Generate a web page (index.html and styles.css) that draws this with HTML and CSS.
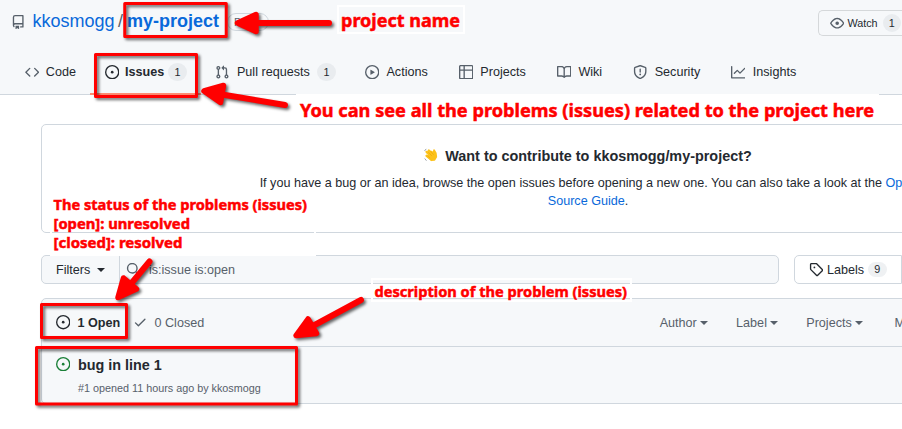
FILE: index.html
```html
<!DOCTYPE html>
<html lang="en">
<head>
<meta charset="utf-8">
<title>Issues · kkosmogg/my-project</title>
<link rel="stylesheet" href="styles.css">
</head>
<body>
<header class="header">
  <div class="title-row">
    <svg class="icon repo-icon" viewBox="0 0 16 16"><path fill-rule="evenodd" d="M2 2.500A2.500 2.500 0 014.500 0h8.750a.750.750 0 01.750.750v12.500a.750.750 0 01-.750.750h-2.500a.750.750 0 110-1.500h1.750v-2h-8a1 1 0 00-.714 1.700.750.750 0 01-1.072 1.050A2.495 2.495 0 012 11.500v-9zm10.500-1V9h-8c-.356 0-.694.074-1 .208V2.500a1 1 0 011-1h8zM5 12.250v3.250a.250.250 0 00.400.200l1.450-1.087a.250.250 0 01.300 0L8.600 15.700a.250.250 0 00.400-.200v-3.250a.250.250 0 00-.250-.250h-3.500a.250.250 0 00-.250.250z"/></svg>
    <a class="owner">kkosmogg</a><span class="slash">/</span><a class="repo">my-project</a>
    <span class="badge">Public</span>
    <div class="watch"><svg class="icon" viewBox="0 0 16 16"><path fill-rule="evenodd" d="M1.679 7.932c.412-.621 1.242-1.750 2.366-2.717C5.175 4.242 6.527 3.500 8 3.500c1.473 0 2.824.742 3.955 1.715 1.124.967 1.954 2.096 2.366 2.717a.119.119 0 010 .136c-.412.621-1.242 1.750-2.366 2.717C10.825 11.758 9.473 12.500 8 12.500c-1.473 0-2.824-.742-3.955-1.715C2.920 9.818 2.090 8.690 1.679 8.068a.119.119 0 010-.136zM8 2c-1.981 0-3.670.992-4.933 2.078C1.797 5.169.880 6.423.430 7.100a1.619 1.619 0 000 1.798c.450.678 1.367 1.932 2.637 3.024C4.329 13.008 6.019 14 8 14c1.981 0 3.670-.992 4.933-2.078 1.270-1.091 2.187-2.345 2.637-3.023a1.619 1.619 0 000-1.798c-.450-.678-1.367-1.932-2.637-3.023C11.671 2.992 9.981 2 8 2zm0 8a2 2 0 100-4 2 2 0 000 4z"/></svg><span>Watch</span><span class="counter">1</span></div>
  </div>
  <nav class="nav">
    <a class="tab"><svg class="icon" viewBox="0 0 16 16"><path d="M4.720 3.220a.750.750 0 011.060 1.060L2.060 8l3.720 3.720a.750.750 0 11-1.060 1.060L.470 8.530a.750.750 0 010-1.060l4.250-4.250zm6.560 0a.750.750 0 10-1.060 1.060L13.940 8l-3.720 3.720a.750.750 0 101.060 1.060l4.250-4.250a.750.750 0 000-1.060l-4.250-4.250z"/></svg>Code</a>
    <a class="tab active"><svg class="icon" viewBox="0 0 16 16"><path d="M8 9.500a1.500 1.500 0 100-3 1.500 1.500 0 000 3z"/><path fill-rule="evenodd" d="M8 0a8 8 0 100 16A8 8 0 008 0zM1.500 8a6.500 6.500 0 1113 0 6.500 6.500 0 01-13 0z"/></svg>Issues<span class="counter">1</span></a>
    <a class="tab wide pulls"><svg class="icon" viewBox="0 0 16 16"><path fill-rule="evenodd" d="M7.177 3.073L9.573.677A.250.250 0 0110 .854v4.792a.250.250 0 01-.427.177L7.177 3.427a.250.250 0 010-.354zM3.750 2.500a.750.750 0 100 1.500.750.750 0 000-1.500zm-2.250.750a2.250 2.250 0 113 2.122v5.256a2.251 2.251 0 11-1.500 0V5.372A2.250 2.250 0 011.500 3.250zM11 2.500h-1V4h1a1 1 0 011 1v5.628a2.251 2.251 0 101.500 0V5A2.500 2.500 0 0011 2.500zm1 10.250a.750.750 0 111.500 0 .750.750 0 01-1.500 0zM3.750 12a.750.750 0 100 1.500.750.750 0 000-1.500z"/></svg>Pull requests<span class="counter">1</span></a>
    <a class="tab wide"><svg class="icon" viewBox="0 0 16 16"><path fill-rule="evenodd" d="M1.500 8a6.500 6.500 0 1113 0 6.500 6.500 0 01-13 0zM8 0a8 8 0 100 16A8 8 0 008 0zM6.379 5.227A.250.250 0 006 5.442v5.117a.250.250 0 00.379.214l4.264-2.559a.250.250 0 000-.428L6.379 5.227z"/></svg>Actions</a>
    <a class="tab wide"><svg class="icon" viewBox="0 0 16 16"><path fill-rule="evenodd" d="M0 1.750C0 .784.784 0 1.750 0h12.500C15.216 0 16 .784 16 1.750v12.500A1.750 1.750 0 0114.250 16H1.750A1.750 1.750 0 010 14.250V1.750zM1.500 6.500v7.750c0 .138.112.250.250.250H5v-8H1.500zM6.500 6.500v8h7.750a.250.250 0 00.250-.250V6.500h-8zM14.500 5V1.750a.250.250 0 00-.250-.250H6.500V5h8zM5 5V1.500H1.750a.250.250 0 00-.250.250V5H5z"/></svg>Projects</a>
    <a class="tab wide"><svg class="icon" viewBox="0 0 16 16"><path fill-rule="evenodd" d="M0 1.750A.750.750 0 01.750 1h4.253c1.227 0 2.317.590 3 1.501A3.744 3.744 0 0111.006 1h4.245a.750.750 0 01.750.750v10.500a.750.750 0 01-.750.750h-4.507a2.250 2.250 0 00-1.591.659l-.622.621a.750.750 0 01-1.060 0l-.622-.621A2.250 2.250 0 005.258 13H.750a.750.750 0 01-.750-.750V1.750zm8.755 3a2.250 2.250 0 012.250-2.250H14.500v9h-3.757c-.710 0-1.400.201-1.992.572l.004-7.322zm-1.504 7.324l.004-5.073-.002-2.253A2.250 2.250 0 005.003 2.500H1.500v9h3.757a3.750 3.750 0 011.994.574z"/></svg>Wiki</a>
    <a class="tab wide"><svg class="icon" viewBox="0 0 16 16"><path fill-rule="evenodd" d="M7.467.133a1.750 1.750 0 011.066 0l5.250 1.680A1.750 1.750 0 0115 3.480V7c0 1.566-.320 3.182-1.303 4.682-.983 1.498-2.585 2.813-5.032 3.855a1.700 1.700 0 01-1.330 0c-2.447-1.042-4.049-2.357-5.032-3.855C1.320 10.182 1 8.566 1 7V3.480a1.750 1.750 0 011.217-1.667l5.250-1.680zm.610 1.429a.250.250 0 00-.153 0l-5.250 1.680a.250.250 0 00-.174.238V7c0 1.358.275 2.666 1.057 3.860.784 1.194 2.121 2.340 4.366 3.297a.200.200 0 00.154 0c2.245-.956 3.582-2.104 4.366-3.298C13.225 9.666 13.500 8.360 13.500 7V3.480a.250.250 0 00-.174-.237l-5.250-1.680zM9 10.500a1 1 0 11-2 0 1 1 0 012 0zm-.250-5.750a.750.750 0 10-1.500 0v3a.750.750 0 001.500 0v-3z"/></svg>Security</a>
    <a class="tab wide"><svg class="icon" viewBox="0 0 16 16"><path d="M1.500 1.750a.750.750 0 00-1.500 0v12.500c0 .414.336.750.750.750h14.500a.750.750 0 000-1.500H1.500V1.750zm14.280 2.530a.750.750 0 00-1.060-1.060L10 7.940 7.530 5.470a.750.750 0 00-1.060 0L3.220 8.720a.750.750 0 001.060 1.060L7 7.060l2.470 2.470a.750.750 0 001.060 0l5.250-5.250z"/></svg>Insights</a>
  </nav>
</header>
<main class="main">
  <section class="contribute">
    <h2 class="contribute-title"><svg class="wave" viewBox="0 0 16 16"><path d="M3 4.500L9.500 11M5.500 3L11 9M3 9l5 4" stroke="#fcc21b" stroke-width="2.800" stroke-linecap="round"/><path d="M8 4l3 1.500L11.500 2.500 13.500 6l.500 4-2 3.500-3.500.500L5 10z" fill="#fcc21b" stroke="#fcc21b" stroke-width="2" stroke-linejoin="round"/><path d="M5 5l4 4M7.500 3.700l3.500 4M3.500 8.500l3.500 3" stroke="#eda600" stroke-width=".700"/><path d="M.500 3.500l2-2.500M.800 12l2 2.500" stroke="#9aa0a6" stroke-width="1.100"/></svg>Want to contribute to kkosmogg/my-project?</h2>
    <p class="contribute-text">If you have a bug or an idea, browse the open issues before opening a new one. You can also take a look at the <a class="link">Open<br>Source Guide</a>.</p>
  </section>
  <div class="toolbar">
    <div class="search">
      <div class="filters">Filters<i class="caret"></i></div>
      <div class="query"><svg class="icon" viewBox="0 0 16 16"><path fill-rule="evenodd" d="M11.500 7a4.499 4.499 0 11-8.998 0A4.499 4.499 0 0111.500 7zm-.820 4.740a6 6 0 111.060-1.060l3.040 3.040a.750.750 0 11-1.060 1.060l-3.040-3.040z"/></svg>is:issue is:open</div>
    </div>
    <div class="labels"><svg class="icon" viewBox="0 0 16 16"><path fill-rule="evenodd" d="M2.500 7.775V2.750a.250.250 0 01.250-.250h5.025a.250.250 0 01.177.073l6.250 6.250a.250.250 0 010 .354l-5.025 5.025a.250.250 0 01-.354 0l-6.250-6.250a.250.250 0 01-.073-.177zm-1.500 0V2.750C1 1.784 1.784 1 2.750 1h5.025c.464 0 .910.184 1.238.513l6.250 6.250a1.750 1.750 0 010 2.474l-5.026 5.026a1.750 1.750 0 01-2.474 0l-6.250-6.250A1.750 1.750 0 011 7.775zM6 5a1 1 0 100 2 1 1 0 000-2z"/></svg>Labels<span class="counter">9</span></div>
  </div>
  <section class="issues">
    <div class="issues-head">
      <svg class="icon dark" viewBox="0 0 16 16"><path d="M8 9.500a1.500 1.500 0 100-3 1.500 1.500 0 000 3z"/><path fill-rule="evenodd" d="M8 0a8 8 0 100 16A8 8 0 008 0zM1.500 8a6.500 6.500 0 1113 0 6.500 6.500 0 01-13 0z"/></svg><b class="open">1 Open</b>
      <svg class="icon check" viewBox="0 0 16 16"><path d="M13.780 4.220a.750.750 0 010 1.060l-7.250 7.250a.750.750 0 01-1.060 0L2.220 9.280a.750.750 0 011.060-1.060L6 10.940l6.720-6.720a.750.750 0 011.060 0z"/></svg><span>0 Closed</span>
      <div class="menus"><span>Author<i class="caret"></i></span><span>Label<i class="caret"></i></span><span>Projects<i class="caret"></i></span><span class="milestones">Milestones<i class="caret"></i></span></div>
    </div>
    <div class="issue">
      <svg class="icon green" viewBox="0 0 16 16"><path d="M8 9.500a1.500 1.500 0 100-3 1.500 1.500 0 000 3z"/><path fill-rule="evenodd" d="M8 0a8 8 0 100 16A8 8 0 008 0zM1.500 8a6.500 6.500 0 1113 0 6.500 6.500 0 01-13 0z"/></svg>
      <div><div class="issue-title">bug in line 1</div><div class="issue-meta">#1 opened 11 hours ago by kkosmogg</div></div>
    </div>
  </section>
</main>
<svg class="notes" viewBox="0 0 902 429">
  <g class="frames">
    <rect x="338" y="6" width="126" height="27"/>
    <rect x="297" y="95" width="581" height="26"/>
    <rect x="51" y="195" width="264" height="60"/>
    <rect x="372" y="279" width="259" height="22"/>
  </g>
  <g class="boxes">
    <rect x="124.750" y="3.500" width="101.500" height="33"/>
    <rect x="95.500" y="54.500" width="101" height="42"/>
    <rect x="41.500" y="304.500" width="85" height="33"/>
    <rect x="36.500" y="347.500" width="260" height="56.500"/>
  </g>
  <g class="arrows">
    <path d="M329 23H255"/><path class="head" d="M237.500 23L256 14.500V31.500z"/>
    <path d="M285 105L219 94"/><path class="head" d="M204 91L223.500 85.500 220.500 102.500z"/>
    <path d="M149.500 261.500L130 285"/><path class="head" d="M118 297.500L123.500 278 136.500 289z"/>
    <path d="M361 300L310 327.500"/><path class="head" d="M296 335.500L308 319 316.500 333.500z"/>
  </g>
  <g class="note-text">
    <text class="large" x="341" y="27" textLength="119" lengthAdjust="spacingAndGlyphs">project name</text>
    <text class="large" x="300" y="116.500" textLength="574" lengthAdjust="spacingAndGlyphs">You can see all the problems (issues) related to the project here</text>
    <text x="53.500" y="210" textLength="253.500" lengthAdjust="spacingAndGlyphs">The status of the problems (issues)</text>
    <text x="53.500" y="229" textLength="136.500" lengthAdjust="spacingAndGlyphs">[open]: unresolved</text>
    <text x="53.500" y="248" textLength="129" lengthAdjust="spacingAndGlyphs">[closed]: resolved</text>
    <text x="374.500" y="296.500" textLength="252.500" lengthAdjust="spacingAndGlyphs">description of the problem (issues)</text>
  </g>
</svg>
</body>
</html>
```
FILE: styles.css
```css
* { box-sizing: border-box; }
body {
  margin: 0;
  width: 902px;
  height: 429px;
  overflow: hidden;
  position: relative;
  background: #fff;
  color: #24292f;
  font: 12.6px/18px "Liberation Sans", Arial, sans-serif;
}
.icon { width: 14.4px; height: 14.4px; flex: none; fill: #57606a; }
.header { height: 95px; background: #f6f8fa; border-bottom: 1px solid #d0d7de; }
.title-row { display: flex; height: 50px; padding: 10px 0 0 10.500px; font-size: 18px; line-height: 22px; }
.repo-icon { margin: 4.500px 7.500px 0 0; }
.owner, .repo, .link { color: #0969da; }
.slash { margin: 0 4px 0 3.500px; color: #57606a; }
.repo { font-weight: bold; }
.badge {
  width: 42px; height: 18px; margin: 3px 0 0 8px; padding-left: 6px;
  border: 1px solid #d0d7de; border-radius: 9px;
  color: #57606a; font-size: 10.8px; line-height: 16px;
}
.watch {
  display: flex; align-items: center; flex: none;
  width: 84px; height: 26px; margin-left: auto; padding-left: 11px;
  border: 1px solid #d5d8da; border-right: 0; border-radius: 5px 0 0 5px;
  font-size: 10.8px; line-height: 18px;
}
.watch .icon { margin-right: 3px; }
.counter {
  min-width: 18.500px; height: 18px; margin-left: 4px; padding: 0 6px;
  border-radius: 9px; background: #e9ecef; text-align: center;
  font-size: 10.8px; font-weight: normal; line-height: 18px;
}
.watch .counter { margin-left: 5px; flex: none; }
.nav { display: flex; height: 44px; padding-left: 10.500px; }
.tab { display: flex; align-items: center; padding: 0 14.400px; white-space: nowrap; }
.tab .icon { margin-right: 6.500px; }
.tab .counter { margin-left: 4px; }
.wide { padding: 0 15.400px; }
.wide .icon { margin-right: 7.400px; }
.pulls { padding: 0 13.500px 0 14px; }
.pulls .counter { margin-left: 7.500px; }
.active { position: relative; font-weight: bold; }
.active .icon { margin-right: 6px; fill: #24292f; }
.active::after { content: ""; position: absolute; left: 0; right: 0; bottom: -1px; height: 2px; background: #fd8c73; }
.main { width: 1135px; padding: 29px 0 0 41px; }
.contribute { height: 109px; padding-top: 22px; border: 1px solid #d0d7de; border-radius: 5px; text-align: center; }
.contribute-title { display: flex; justify-content: center; align-items: center; height: 18px; margin: 0 0 9px; font-size: 14.4px; line-height: 18px; }
.wave { width: 14px; height: 14px; margin: -2px 7px 0 0; fill: none; }
.contribute-text { margin: 0; }
.toolbar { display: flex; margin-top: 22px; gap: 15px; }
.search { display: flex; width: 738px; height: 29px; border: 1px solid #d0d7de; border-radius: 5px; background: #f6f8fa; }
.filters { display: flex; align-items: center; width: 78px; padding-left: 14px; border-right: 1px solid #d0d7de; }
.caret { display: inline-block; border: 4px solid transparent; border-top-color: currentColor; border-bottom: 0; margin-left: 3px; vertical-align: middle; }
.filters .caret { margin-left: 7px; }
.query { display: flex; align-items: center; padding-left: 6px; color: #57606a; }
.query .icon { margin-right: 8.500px; }
.labels { display: flex; align-items: center; width: 108px; height: 29px; padding-left: 14px; border: 1px solid #d0d7de; border-radius: 5px 0 0 5px; }
.labels .icon { margin-right: 3.500px; fill: #24292f; }
.labels .counter { height: 15px; line-height: 15px; background: #eff1f3; }
.issues { height: 106px; margin-top: 14px; border: 1px solid #d0d7de; border-radius: 5px; background: #f6f8fa; }
.issues-head { display: flex; align-items: center; height: 48px; padding-left: 14px; border-bottom: 1px solid #d0d7de; color: #57606a; }
.dark { fill: #24292f; }
.open { margin: 0 13px 0 7px; color: #24292f; }
.check { margin-right: 7px; }
.menus { display: flex; gap: 28.300px; margin-left: 455.500px; white-space: nowrap; }
.milestones { margin-left: 3.500px; }
.issue { display: flex; padding: 9px 0 0 14px; }
.green { margin: 1px 7.500px 0 0; fill: #1a7f37; }
.issue-title { font-size: 14.4px; font-weight: bold; line-height: 18px; }
.issue-meta { margin-top: 6px; color: #57606a; font-size: 10.8px; line-height: 16px; }
.notes { position: absolute; left: 0; top: 0; width: 902px; height: 429px; }
.frames { fill: none; stroke: #fff; stroke-width: 2; }
.boxes { fill: none; stroke: #f00; stroke-width: 3; stroke-linejoin: round; filter: drop-shadow(2px 2px 1.500px rgba(0, 0, 0, .6)); }
.arrows { fill: none; stroke: #f00; stroke-width: 6; stroke-linecap: round; stroke-linejoin: round; filter: drop-shadow(2px 2px 1.500px rgba(0, 0, 0, .6)); }
.head { fill: #f00; stroke-width: 5.500; }
.note-text { fill: #f00; font: bold 14.500px "Noto Sans", sans-serif; stroke: #f00; stroke-width: .5; }
.large { font-size: 18.500px; }
```
